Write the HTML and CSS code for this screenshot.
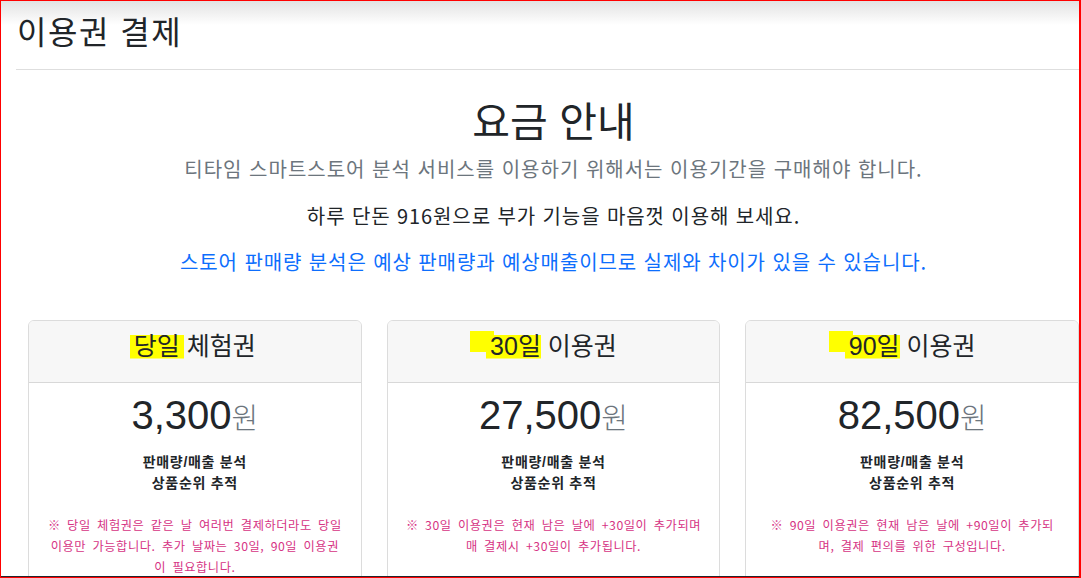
FILE: index.html
```html
<!DOCTYPE html>
<html lang="ko">

<head>
    <meta charset="UTF-8">
    <title>이용권 결제</title>
    <link rel="stylesheet" href="styles.css">
</head>

<body>
    <div class="frame">
        <div class="page">
            <header class="page-head">
                <h2>이용권 결제</h2>
            </header>

            <section class="intro">
                <h1>요금 안내</h1>
                <p class="lead">티타임 스마트스토어 분석 서비스를 이용하기 위해서는 이용기간을 구매해야 합니다.</p>
                <p class="promo">하루 단돈 916원으로 부가 기능을 마음껏 이용해 보세요.</p>
                <p class="notice">스토어 판매량 분석은 예상 판매량과 예상매출이므로 실제와 차이가 있을 수 있습니다.</p>
            </section>

            <div class="plans">
                <div class="plan">
                    <div class="plan-head">
                        <h4><span class="mark">당일</span> 체험권</h4>
                    </div>
                    <div class="plan-body">
                        <h1 class="price">3,300<small>원</small></h1>
                        <ul class="features">
                            <li>판매량/매출 분석</li>
                            <li>상품순위 추적</li>
                        </ul>
                        <code class="note">※ 당일 체험권은 같은 날 여러번 결제하더라도 당일 이용만 가능합니다. 추가 날짜는 30일, 90일 이용권이 필요합니다.</code>
                    </div>
                </div>

                <div class="plan">
                    <div class="plan-head">
                        <h4><span class="mark mark-long">30일</span> 이용권</h4>
                    </div>
                    <div class="plan-body">
                        <h1 class="price">27,500<small>원</small></h1>
                        <ul class="features">
                            <li>판매량/매출 분석</li>
                            <li>상품순위 추적</li>
                        </ul>
                        <code class="note">※ 30일 이용권은 현재 남은 날에 +30일이 추가되며 매 결제시 +30일이 추가됩니다.</code>
                    </div>
                </div>

                <div class="plan">
                    <div class="plan-head">
                        <h4><span class="mark mark-long">90일</span> 이용권</h4>
                    </div>
                    <div class="plan-body">
                        <h1 class="price">82,500<small>원</small></h1>
                        <ul class="features">
                            <li>판매량/매출 분석</li>
                            <li>상품순위 추적</li>
                        </ul>
                        <code class="note note-narrow">※ 90일 이용권은 현재 남은 날에 +90일이 추가되며, 결제 편의를 위한 구성입니다.</code>
                    </div>
                </div>
            </div>
        </div>
    </div>
</body>

</html>
```

FILE: styles.css
```css
* {
    box-sizing: border-box;
}

body {
    margin: 0;
    font-family: 'Liberation Sans', 'Noto Sans CJK KR', sans-serif;
    color: #212529;
    background: #fff;
}

.frame {
    position: relative;
    width: 1081px;
    height: 578px;
    overflow: hidden;
    border: 1px solid #ff0000;
    border-right-width: 2px;
    background: linear-gradient(#e2e2e2 0, #fff 24px);
}

/* dark line above the red bottom edge */
.frame::after {
    content: "";
    position: absolute;
    left: 0;
    right: 0;
    bottom: 0;
    height: 1px;
    background: #23262b;
}

.page {
    width: 1075px;
    margin-left: 15px;
}

.page-head {
    padding: 12px 0 16px 1px;
    border-bottom: 1px solid #dedede;
}

.page-head h2 {
    margin: 0;
    font-size: 32px;
    font-weight: 400;
    line-height: 40px;
    letter-spacing: 1.5px;
}

.intro {
    text-align: center;
    padding-top: 25px;
}

.intro h1 {
    margin: 0;
    font-family: 'Noto Sans CJK KR', sans-serif;
    font-size: 41px;
    font-weight: 400;
    line-height: 48px;
}

.intro p {
    margin: 0;
    font-family: 'Noto Sans CJK KR', sans-serif;
    font-size: 20px;
    line-height: 30px;
    letter-spacing: 0.9px;
}

.intro .lead {
    margin-top: 11px;
    color: #6c757d;
    letter-spacing: 1px;
}

.intro .promo {
    margin-top: 17px;
    color: #212529;
}

.intro .notice {
    margin-top: 16px;
    color: #0d6efd;
}

.plans {
    display: grid;
    grid-template-columns: repeat(3, 1fr);
    gap: 25px;
    padding: 0 12px;
    margin-top: 43px;
}

.plan {
    border: 1px solid #dcdcdc;
    border-radius: 6px;
    background: #fff;
    overflow: hidden;
}

.plan-head {
    background: #f7f7f7;
    border-bottom: 1px solid #d8d8d8;
    padding: 11px 0 21px;
    text-align: center;
}

.plan-head h4 {
    margin: 0;
    font-size: 25px;
    font-weight: 400;
    line-height: 29px;
}

/* marker-pen highlight */
.mark {
    position: relative;
    z-index: 0;
    padding: 0 4px;
    margin: 0 -4px;
    background: linear-gradient(#ffff00, #ffff00) 0 65% / 100% 84% no-repeat;
}

.mark-long {
    padding-right: 0;
    margin-right: 0;
}

.mark-long::before {
    content: "";
    position: absolute;
    left: -16px;
    top: -1px;
    width: 24px;
    height: 21px;
    background: #ffff00;
    z-index: -1;
}

.plan-body {
    padding: 8px 16px 16px;
    text-align: center;
}

.price {
    margin: 0;
    font-size: 40px;
    font-weight: 400;
    line-height: 48px;
}

.price small {
    font-size: 29px;
    font-weight: 300;
    color: #6c757d;
}

.features {
    list-style: none;
    margin: 9px 0 21px;
    padding: 0;
    font-size: 14px;
    font-weight: 700;
    line-height: 21px;
    letter-spacing: 0.7px;
}

.note {
    display: block;
    font-family: 'Noto Sans CJK KR', monospace;
    font-size: 12.25px;
    line-height: 21px;
    letter-spacing: 0.55px;
    word-spacing: 2.4px;
    color: #d63384;
}

.note-narrow {
    padding: 0 4px;
}
```
